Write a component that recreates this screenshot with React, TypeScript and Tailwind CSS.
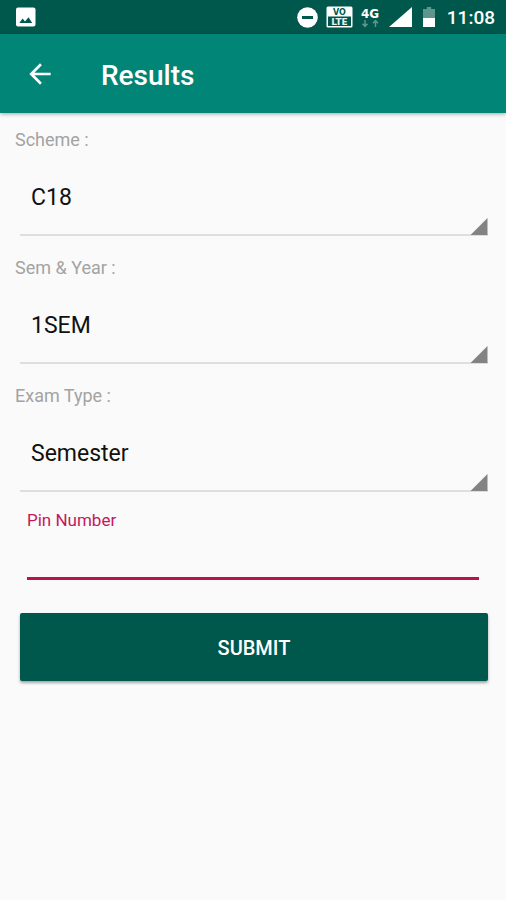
import React, { useState } from 'react';

interface SpinnerProps {
  id: string;
  label: string;
  options: string[];
}

const Spinner: React.FC<SpinnerProps> = ({ id, label, options }) => {
  const [value, setValue] = useState(options[0]);

  return (
    <div className="flex flex-col gap-1">
      <label htmlFor={id} className="px-[15px] text-lg leading-6 text-[#a3a3a3]">{label}</label>
      <div className="relative mr-[18px] ml-5">
        <select
          id={id}
          value={value}
          onChange={(e) => setValue(e.target.value)}
          className="block h-20 w-full appearance-none rounded-none border-b-2 border-[#dedede] bg-transparent pt-1.5 pr-6 pl-[11px] text-[23px] text-[#111111] outline-none"
        >
          {options.map((option) => (
            <option key={option} value={option}>{option}</option>
          ))}
        </select>
        <svg className="pointer-events-none absolute right-0 bottom-0 size-[18px]" viewBox="0 0 18 18" aria-hidden="true">
          <path d="M17.5 0v17H0.5z" fill="#838383" />
        </svg>
      </div>
    </div>
  );
};

const StatusBar: React.FC = () => (
  <div className="flex h-[34px] items-center bg-[#00574b] pr-[11px] pl-4 text-white">
    <svg className="size-5" viewBox="0 0 20 20" aria-hidden="true">
      <rect y="0.5" width="19.5" height="19" rx="2" fill="#fff" />
      <path d="M3.3 16 6.6 11.6l2.4 2.8 3.5-4.2L16.2 16z" fill="#00574b" />
    </svg>

    <div className="ml-auto flex items-center">
      <svg className="size-[21px]" viewBox="0 0 21 21" aria-hidden="true">
        <circle cx="10.5" cy="10.5" r="10.3" fill="#fff" />
        <rect x="5" y="9" width="11" height="3" fill="#00574b" />
      </svg>

      <svg className="ml-2 h-[22px] w-[27px]" viewBox="0 0 27 22" aria-hidden="true">
        <rect x="0.5" y="0.5" width="26" height="21" rx="1.5" fill="#fff" />
        <rect x="2" y="10.5" width="23" height="9.5" fill="#00574b" />
        <g fontFamily="'DejaVu Sans', sans-serif" fontWeight="700" textAnchor="middle">
          <text x="13.5" y="8.8" fontSize="8" fill="#00574b">VO</text>
          <text x="13.5" y="18.6" fontSize="9" fill="#e6f2f0">LTE</text>
        </g>
      </svg>

      <svg className="ml-[7px] h-6 w-5" viewBox="0 0 20 24" aria-hidden="true">
        <text x="10" y="13" fontSize="12" fontWeight="700" fontFamily="'DejaVu Sans', sans-serif" textAnchor="middle" fill="#fff">4G</text>
        <path d="M5 15v6.5M2.5 18.8 5 21.5l2.5-2.7M15.5 22v-6.5M13 18.2l2.5-2.7 2.5 2.7" fill="none" stroke="#5f958c" strokeWidth="1.5" />
      </svg>

      <svg className="ml-[9px] h-5 w-[23px]" viewBox="0 0 23 20" aria-hidden="true">
        <path d="M23 0v20H0z" fill="#fff" />
      </svg>

      <svg className="ml-[11px] h-5 w-3" viewBox="0 0 12 20" aria-hidden="true">
        <path d="M3.8 0h4.4v2H12v9H0V2h3.8z" fill="#5f958c" />
        <path d="M0 11h12v9H0z" fill="#fff" />
      </svg>

      <span className="ml-3 pt-0.5 text-[19px] leading-6 font-medium">11:08</span>
    </div>
  </div>
);

const App: React.FC = () => {
  const [pin, setPin] = useState('');

  const handleSubmit = (e: React.FormEvent) => {
    e.preventDefault();
  };

  return (
    <div className="min-h-screen w-full bg-[#fafafa] font-['Roboto',sans-serif]">
      <StatusBar />

      <header className="flex h-[79px] items-center bg-[#008577] px-6 text-white shadow-[0_1px_4px_rgba(0,0,0,0.35)]">
        <button type="button" aria-label="Back" className="flex size-8 items-center justify-center">
          <svg className="size-8" viewBox="0 0 24 24" fill="#fff" aria-hidden="true">
            <path d="M20 11H7.83l5.59-5.59L12 4l-8 8 8 8 1.41-1.41L7.83 13H20v-2z" />
          </svg>
        </button>
        <h1 className="ml-[45px] pt-1 text-[28px] leading-8 font-medium">Results</h1>
      </header>

      <form onSubmit={handleSubmit} className="pt-[15px]">
        <div className="flex flex-col gap-5">
          <Spinner id="scheme" label="Scheme :" options={['C18']} />
          <Spinner id="sem" label="Sem & Year :" options={['1SEM']} />
          <Spinner id="exam" label="Exam Type :" options={['Semester']} />
        </div>

        <div className="mx-[27px] mt-4 flex flex-col">
          <label htmlFor="pin" className="text-[17px] leading-6 text-[#c2185b]">Pin Number</label>
          <input
            id="pin"
            type="text"
            value={pin}
            onChange={(e) => setPin(e.target.value)}
            className="h-12 w-full border-b-[3px] border-[#b8124f] bg-transparent text-[23px] text-[#111111] outline-none"
          />
        </div>

        <div className="mt-[33px] pr-[18px] pl-5">
          <button
            type="submit"
            className="h-[68px] w-full rounded-xs bg-[#00574b] pt-0.5 text-xl font-medium text-white shadow-[0_2px_3px_rgba(0,0,0,0.35)]"
          >
            SUBMIT
          </button>
        </div>
      </form>
    </div>
  );
};

export default App;
